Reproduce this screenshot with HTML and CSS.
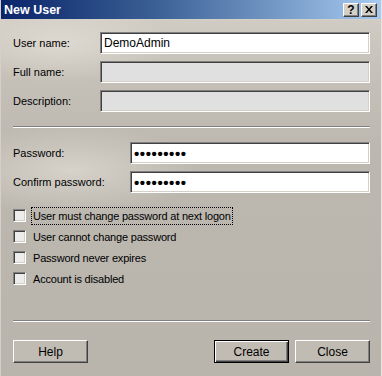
FILE: index.html
```html
<!DOCTYPE html>
<html lang="en">

<head>
    <meta charset="UTF-8">
    <title>New User</title>
    <link rel="stylesheet" href="styles.css">
</head>

<body>
    <div class="dialog">
        <!-- Title bar -->
        <div class="titlebar">
            <span class="title">New User</span>
            <div class="title-buttons">
                <button class="title-btn help-btn">?</button>
                <button class="title-btn close-btn">
                    <svg width="8" height="7" viewBox="0 0 8 7">
                        <path d="M0 0h2l2 2.5L6 0h2L5 3.5 8 7H6L4 4.5 2 7H0l3-3.5z" fill="#000"/>
                    </svg>
                </button>
            </div>
        </div>

        <div class="content">
            <!-- Names -->
            <div class="form-grid names">
                <label for="userName">User name:</label>
                <input type="text" id="userName" class="field" value="DemoAdmin">
                <label for="fullName">Full name:</label>
                <input type="text" id="fullName" class="field" disabled>
                <label for="description">Description:</label>
                <input type="text" id="description" class="field" disabled>
            </div>

            <div class="separator"></div>

            <!-- Passwords -->
            <div class="form-grid passwords">
                <label for="password">Password:</label>
                <input type="password" id="password" class="field pw" value="DemoAdmin">
                <label for="confirm">Confirm password:</label>
                <input type="password" id="confirm" class="field pw" value="DemoAdmin">
            </div>

            <!-- Options -->
            <div class="options">
                <label class="option"><input type="checkbox"><span class="focused">User must change password at next logon</span></label>
                <label class="option"><input type="checkbox"><span>User cannot change password</span></label>
                <label class="option"><input type="checkbox"><span>Password never expires</span></label>
                <label class="option"><input type="checkbox"><span>Account is disabled</span></label>
            </div>

            <div class="separator bottom"></div>

            <!-- Buttons -->
            <div class="footer">
                <button class="btn">Help</button>
                <div class="footer-right">
                    <button class="btn default">Create</button>
                    <button class="btn">Close</button>
                </div>
            </div>
        </div>
    </div>
</body>

</html>
```

FILE: styles.css
```css
* {
    margin: 0;
    padding: 0;
    box-sizing: border-box;
}

body {
    font-family: 'Liberation Sans', Arial, sans-serif;
    font-size: 11px;
    color: #000;
    background-color: #b9b5ad;
    overflow: hidden;
}

.dialog {
    width: 382px;
    height: 376px;
    display: flex;
    flex-direction: column;
    border-left: 1px solid #d4d0c8;
    border-right: 1px solid #e8e6e0;
    background:
        radial-gradient(ellipse 110px 40px at 60px 42px, rgba(222, 218, 210, 0.95), rgba(222, 218, 210, 0)),
        radial-gradient(ellipse 130px 45px at 70px 170px, rgba(216, 212, 204, 0.95), rgba(216, 212, 204, 0)),
        linear-gradient(to bottom, #d4d0c8 0, #c6c2ba 18%, #bcb8b0 40%, #b9b5ad 100%);
}

/* Title bar */
.titlebar {
    height: 20px;
    display: flex;
    align-items: center;
    justify-content: space-between;
    padding: 0 4px 0 3px;
    background: linear-gradient(to right, #0a246a 0, #3a5f94 40%, #a6caf0 100%);
    border-bottom: 1px solid #d4d0c8;
}

.title {
    color: #fff;
    font-weight: bold;
    font-size: 12.5px;
}

.title-buttons {
    display: flex;
    gap: 2px;
}

.title-btn {
    width: 16px;
    height: 14px;
    background-color: #d4d0c8;
    border: 1px solid;
    border-color: #fff #404040 #404040 #fff;
    box-shadow: inset -1px -1px #808080;
    display: flex;
    align-items: center;
    justify-content: center;
    font-family: 'Liberation Sans', Arial, sans-serif;
    font-weight: bold;
    font-size: 12px;
    line-height: 1;
}

/* Content */
.content {
    flex: 1;
    padding: 12px 11px 0 12px;
    display: flex;
    flex-direction: column;
}

.form-grid {
    display: grid;
    align-items: center;
    row-gap: 7px;
}

.names {
    grid-template-columns: 87px 1fr;
}

.passwords {
    grid-template-columns: 117px 1fr;
    margin-top: 14px;
}

.field {
    height: 22px;
    width: 100%;
    font-family: 'Liberation Sans', Arial, sans-serif;
    font-size: 12px;
    padding: 0 3px;
    background-color: #fff;
    border: 1px solid;
    border-color: #808080 #fff #fff #808080;
    box-shadow: inset 1px 1px #404040, inset -1px -1px #d4d0c8;
    outline: none;
}

.field:disabled {
    background-color: #e0e0e0;
}

.pw {
    font-size: 15px;
    letter-spacing: 0.6px;
    font-weight: bold;
}

.separator {
    height: 2px;
    border-top: 1px solid #808080;
    border-bottom: 1px solid #fff;
    margin-top: 14px;
}

.separator.bottom {
    margin-top: 31px;
}

/* Checkboxes */
.options {
    margin-top: 12px;
    display: flex;
    flex-direction: column;
}

.option {
    height: 21px;
    display: flex;
    align-items: center;
    gap: 5px;
}

.option input {
    appearance: none;
    width: 13px;
    height: 13px;
    background-color: #ececec;
    border: 1px solid;
    border-color: #808080 #fff #fff #808080;
    box-shadow: inset 1px 1px #404040, inset -1px -1px #d4d0c8;
}

.option span {
    padding: 2px 1px;
    border: 1px dotted transparent;
    letter-spacing: -0.2px;
}

.option .focused {
    border-color: #000;
}

/* Footer buttons */
.footer {
    margin-top: 18px;
    display: flex;
    justify-content: space-between;
}

.footer-right {
    display: flex;
    gap: 6px;
}

.btn {
    width: 75px;
    height: 23px;
    font-family: 'Liberation Sans', Arial, sans-serif;
    font-size: 12px;
    background-color: #c0bcb4;
    border: 1px solid;
    border-color: #fff #404040 #404040 #fff;
    box-shadow: inset -1px -1px #808080;
}

.btn.default {
    border: 1px solid #000;
    box-shadow: inset 1px 1px #fff, inset -1px -1px #404040, inset -2px -2px #808080;
}
```
